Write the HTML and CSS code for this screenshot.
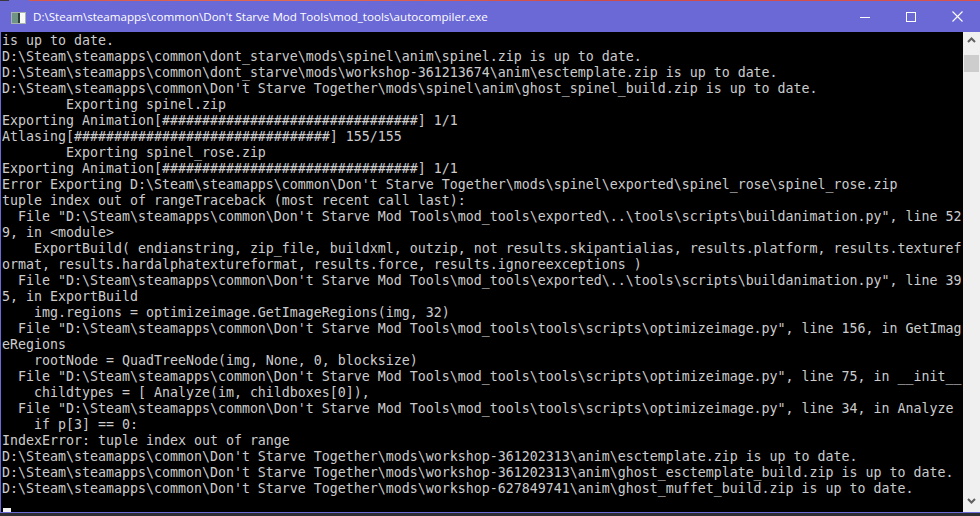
FILE: index.html
```html
<!DOCTYPE html>
<html>
<head>
<meta charset="utf-8">
<link rel="stylesheet" href="styles.css">
</head>
<body>
<div class="desk-strip"></div>
<div class="window">
  <div class="titlebar">
    <svg class="app-icon" width="15" height="12" viewBox="0 0 15 12">
      <rect x="0.5" y="0.5" width="14" height="11" fill="#e6ece9" stroke="#a9b4ae"/>
      <rect x="1" y="1" width="6" height="10" fill="#6f9483"/>
      <rect x="7" y="1" width="2" height="10" fill="#2f3f38"/>
      <rect x="9" y="1" width="5" height="10" fill="#f7f9f8"/>
    </svg>
    <span class="title">D:\Steam\steamapps\common\Don't Starve Mod Tools\mod_tools\autocompiler.exe</span>
    <div class="controls">
      <div class="ctl"><svg width="10" height="10" viewBox="0 0 10 10"><line x1="0" y1="5.5" x2="10" y2="5.5" stroke="#fff" stroke-width="1"/></svg></div>
      <div class="ctl"><svg width="10" height="10" viewBox="0 0 10 10"><rect x="0.5" y="0.5" width="9" height="9" fill="none" stroke="#fff" stroke-width="1"/></svg></div>
      <div class="ctl"><svg width="11" height="11" viewBox="0 0 11 11"><path d="M0.5 0.5 L10.5 10.5 M10.5 0.5 L0.5 10.5" stroke="#fff" stroke-width="1.1"/></svg></div>
    </div>
  </div>
  <div class="body">
    <div class="console"><div class="ln">is up to date.</div><div class="ln">D:\Steam\steamapps\common\dont_starve\mods\spinel\anim\spinel.zip is up to date.</div><div class="ln">D:\Steam\steamapps\common\dont_starve\mods\workshop-361213674\anim\esctemplate.zip is up to date.</div><div class="ln">D:\Steam\steamapps\common\Don't Starve Together\mods\spinel\anim\ghost_spinel_build.zip is up to date.</div><div class="ln">        Exporting spinel.zip</div><div class="ln">Exporting Animation[################################] 1/1</div><div class="ln">Atlasing[################################] 155/155</div><div class="ln">        Exporting spinel_rose.zip</div><div class="ln">Exporting Animation[################################] 1/1</div><div class="ln">Error Exporting D:\Steam\steamapps\common\Don't Starve Together\mods\spinel\exported\spinel_rose\spinel_rose.zip</div><div class="ln">tuple index out of rangeTraceback (most recent call last):</div><div class="ln">  File "D:\Steam\steamapps\common\Don't Starve Mod Tools\mod_tools\exported\..\tools\scripts\buildanimation.py", line 52</div><div class="ln">9, in &lt;module&gt;</div><div class="ln">    ExportBuild( endianstring, zip_file, buildxml, outzip, not results.skipantialias, results.platform, results.texturef</div><div class="ln">ormat, results.hardalphatextureformat, results.force, results.ignoreexceptions )</div><div class="ln">  File "D:\Steam\steamapps\common\Don't Starve Mod Tools\mod_tools\exported\..\tools\scripts\buildanimation.py", line 39</div><div class="ln">5, in ExportBuild</div><div class="ln">    img.regions = optimizeimage.GetImageRegions(img, 32)</div><div class="ln">  File "D:\Steam\steamapps\common\Don't Starve Mod Tools\mod_tools\tools\scripts\optimizeimage.py", line 156, in GetImag</div><div class="ln">eRegions</div><div class="ln">    rootNode = QuadTreeNode(img, None, 0, blocksize)</div><div class="ln">  File "D:\Steam\steamapps\common\Don't Starve Mod Tools\mod_tools\tools\scripts\optimizeimage.py", line 75, in __init__</div><div class="ln">    childtypes = [ Analyze(im, childboxes[0]),</div><div class="ln">  File "D:\Steam\steamapps\common\Don't Starve Mod Tools\mod_tools\tools\scripts\optimizeimage.py", line 34, in Analyze</div><div class="ln">    if p[3] == 0:</div><div class="ln">IndexError: tuple index out of range</div><div class="ln">D:\Steam\steamapps\common\Don't Starve Together\mods\workshop-361202313\anim\esctemplate.zip is up to date.</div><div class="ln">D:\Steam\steamapps\common\Don't Starve Together\mods\workshop-361202313\anim\ghost_esctemplate_build.zip is up to date.</div><div class="ln">D:\Steam\steamapps\common\Don't Starve Together\mods\workshop-627849741\anim\ghost_muffet_build.zip is up to date.</div><div class="ln cursor-line"><span class="cursor"></span></div></div>
    <div class="scrollbar">
      <svg class="arrow" width="9" height="6" viewBox="0 0 9 6"><path d="M1 5 L4.5 1.5 L8 5" fill="none" stroke="#606060" stroke-width="2"/></svg>
      <div class="thumb"></div>
      <div class="track"></div>
      <svg class="arrow" width="9" height="6" viewBox="0 0 9 6"><path d="M1 1 L4.5 4.5 L8 1" fill="none" stroke="#606060" stroke-width="2"/></svg>
    </div>
  </div>
  <div class="bottom-border"></div>
</div>
</body>
</html>
```
FILE: styles.css
```css
html, body {
  margin: 0;
  padding: 0;
  background: #2e2d31;
  width: 980px;
  height: 516px;
  overflow: hidden;
}
.desk-strip {
  height: 1px;
  background: linear-gradient(to right, #3a3740 0px, #3a3740 9px, #6b69d6 9px, #6b69d6 29px, #d8564c 29px, #e06a52 300px, #cf4a4a 600px, #d9534f 980px);
}
.window {
  display: flex;
  flex-direction: column;
  width: 980px;
}
.titlebar {
  height: 31px;
  background: #6b69d6;
  display: flex;
  align-items: center;
  color: #fff;
}
.app-icon {
  margin-left: 11px;
  margin-top: 2px;
  flex: none;
}
.title {
  margin-left: 7px;
  font-family: "Open Sans", "Noto Sans", sans-serif;
  font-size: 11.6px;
  white-space: nowrap;
}
.controls {
  margin-left: auto;
  display: flex;
  height: 31px;
}
.ctl {
  width: 46px;
  display: flex;
  align-items: center;
  justify-content: center;
}
.body {
  display: flex;
  height: 480px;
  border-left: 1px solid #6b69d6;
}
.console {
  flex: 1;
  background: #000;
  padding-left: 1px;
  padding-top: 1px;
  color: #cccccc;
  font-family: "DejaVu Sans Mono", "Liberation Mono", monospace;
  font-size: 13.29px;
  overflow: hidden;
}
.ln {
  height: 16px;
  line-height: 16px;
  white-space: pre;
}
.cursor-line {
  position: relative;
}
.cursor {
  position: absolute;
  left: 1px;
  top: 11px;
  width: 8px;
  height: 4px;
  background: #f2f2f2;
}
.scrollbar {
  width: 17px;
  flex: none;
  background: #f0f0f0;
  display: flex;
  flex-direction: column;
  align-items: center;
}
.arrow {
  margin: 5px 0 6px;
  flex: none;
}
.thumb {
  width: 15px;
  height: 17px;
  margin-top: 6px;
  background: #cdcdcd;
  flex: none;
}
.track {
  flex: 1;
}
.scrollbar .arrow:last-child {
  margin: 6px 0 8px;
}
.bottom-border {
  height: 1px;
  background: #6b69d6;
}
```
